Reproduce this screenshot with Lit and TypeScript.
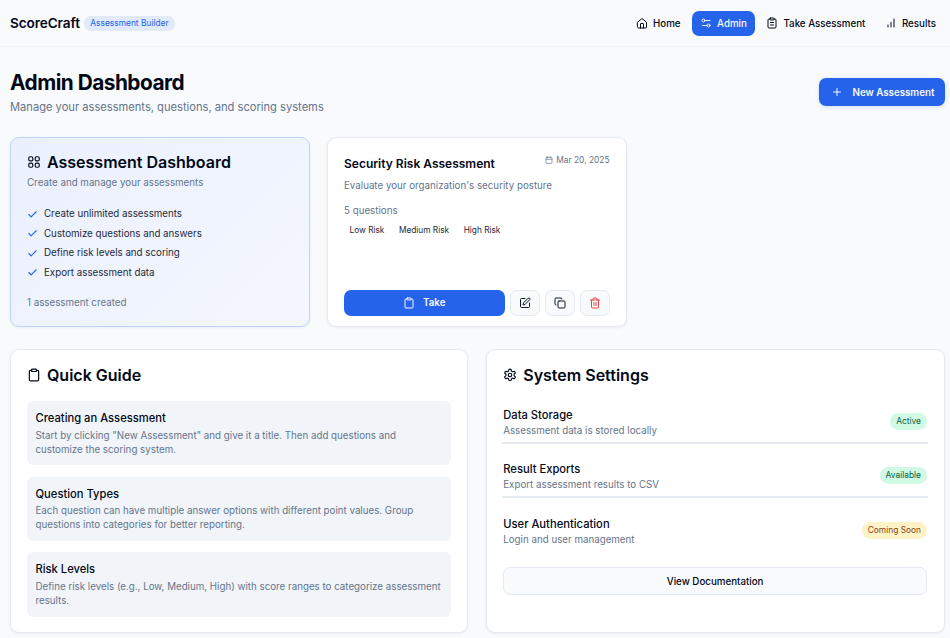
import { LitElement, html, css, svg } from "lit";
import { customElement } from "lit/decorators.js";

const ic = (size: number, body: unknown, sw = 2) => html`<svg class="ic" width=${size} height=${size} viewBox="0 0 24 24" fill="none" stroke="currentColor" stroke-width=${sw} stroke-linecap="round" stroke-linejoin="round">${body}</svg>`;

const clip = svg`<rect x="8" y="2" width="8" height="4" rx="1"/><path d="M16 4h2a2 2 0 0 1 2 2v14a2 2 0 0 1-2 2H6a2 2 0 0 1-2-2V6a2 2 0 0 1 2-2h2"/>`;
const clipText = svg`${clip}<path d="M9 11h6M9 16h6"/>`;
const home = svg`<path d="M3 10.5 12 3l9 7.5V20a2 2 0 0 1-2 2H5a2 2 0 0 1-2-2z"/><path d="M9 22v-8a1 1 0 0 1 1-1h4a1 1 0 0 1 1 1v8"/>`;
const sliders = svg`<path d="M20 7h-9M14 17H5"/><circle cx="17" cy="17" r="3"/><circle cx="7" cy="7" r="3"/>`;
const bars = svg`<path d="M6 20v-4M12 20v-9M18 20V4"/>`;
const plus = svg`<path d="M5 12h14M12 5v14"/>`;
const grid = svg`<rect x="3" y="3" width="7" height="7" rx="2.5"/><rect x="14" y="3" width="7" height="7" rx="2.5"/><rect x="3" y="14" width="7" height="7" rx="2.5"/><rect x="14" y="14" width="7" height="7" rx="2.5"/>`;
const check = svg`<path d="M20 6 9 17l-5-5"/>`;
const cal = svg`<rect x="3" y="4" width="18" height="18" rx="2"/><path d="M16 2v4M8 2v4M3 10h18"/>`;
const edit = svg`<path d="M12 3H5a2 2 0 0 0-2 2v14a2 2 0 0 0 2 2h14a2 2 0 0 0 2-2v-7"/><path d="M18.4 2.6a2.1 2.1 0 0 1 3 3L12 15l-4 1 1-4z"/>`;
const copy = svg`<rect x="8" y="8" width="14" height="14" rx="2"/><path d="M4 16a2 2 0 0 1-2-2V4a2 2 0 0 1 2-2h10a2 2 0 0 1 2 2"/>`;
const trash = svg`<path d="M3 6h18M19 6v14a2 2 0 0 1-2 2H7a2 2 0 0 1-2-2V6M8 6V4a2 2 0 0 1 2-2h4a2 2 0 0 1 2 2v2M10 11v6M14 11v6"/>`;
const gear = svg`<path d="M12.2 2h-.4a2 2 0 0 0-2 2v.2a2 2 0 0 1-1 1.7l-.4.3a2 2 0 0 1-2 0l-.2-.1a2 2 0 0 0-2.7.7l-.2.4a2 2 0 0 0 .7 2.7l.2.1a2 2 0 0 1 1 1.7v.5a2 2 0 0 1-1 1.7l-.2.1a2 2 0 0 0-.7 2.7l.2.4a2 2 0 0 0 2.7.7l.2-.1a2 2 0 0 1 2 0l.4.3a2 2 0 0 1 1 1.7v.2a2 2 0 0 0 2 2h.4a2 2 0 0 0 2-2v-.2a2 2 0 0 1 1-1.7l.4-.3a2 2 0 0 1 2 0l.2.1a2 2 0 0 0 2.7-.7l.2-.4a2 2 0 0 0-.7-2.7l-.2-.1a2 2 0 0 1-1-1.7v-.5a2 2 0 0 1 1-1.7l.2-.1a2 2 0 0 0 .7-2.7l-.2-.4a2 2 0 0 0-2.7-.7l-.2.1a2 2 0 0 1-2 0l-.4-.3a2 2 0 0 1-1-1.7V4a2 2 0 0 0-2-2z"/><circle cx="12" cy="12" r="3"/>`;

const navItems = [
  { label: "Home", icon: home },
  { label: "Admin", icon: sliders, active: true },
  { label: "Take Assessment", icon: clipText },
  { label: "Results", icon: bars },
];
const features = ["Create unlimited assessments", "Customize questions and answers", "Define risk levels and scoring", "Export assessment data"];
const guides = [
  { t: "Creating an Assessment", d: 'Start by clicking "New Assessment" and give it a title. Then add questions and customize the scoring system.' },
  { t: "Question Types", d: "Each question can have multiple answer options with different point values. Group questions into categories for better reporting." },
  { t: "Risk Levels", d: "Define risk levels (e.g., Low, Medium, High) with score ranges to categorize assessment results." },
];
const settings = [
  { t: "Data Storage", d: "Assessment data is stored locally", b: "Active", c: "green" },
  { t: "Result Exports", d: "Export assessment results to CSV", b: "Available", c: "green" },
  { t: "User Authentication", d: "Login and user management", b: "Coming Soon", c: "amber" },
];

@customElement("app-root")
export class AppRoot extends LitElement {
  static styles = css`
    :host { display: block; min-height: 638px; background: #f8fafc; color: #020817; font-family: Inter, "Liberation Sans", sans-serif; overflow: hidden; }
    * { box-sizing: border-box; }
    .ic { display: block; flex: none; }
    header { height: 47px; border-bottom: 1.5px solid #eef2f8; display: flex; align-items: center; justify-content: space-between; padding: 0 6px 0 10px; }
    .brand { display: flex; align-items: center; gap: 4.5px; }
    .logo { font-size: 13.6px; font-weight: 600; letter-spacing: -0.1px; }
    .tag { font-size: 8.4px; height: 15px; line-height: 15px; padding: 0 6px; border-radius: 8px; background: #e1eafb; color: #2563eb; }
    nav { display: flex; align-items: center; gap: 3.5px; }
    .nav { display: flex; align-items: center; gap: 5px; height: 25px; padding: 0 8px; border-radius: 7px; font-size: 9.75px; font-weight: 500; }
    .nav.active { background: #2563eb; color: #f8fafc; }
    main { padding: 0 5.5px 0 9.5px; }
    .top { display: flex; justify-content: space-between; align-items: center; height: 90px; }
    h1 { margin: 0; padding-left: 0.5px; font-size: 20.8px; line-height: 28px; font-weight: 700; letter-spacing: -0.5px; }
    .sub { margin-top: 2px; padding-left: 0.5px; font-size: 11.15px; color: #64748b; line-height: 17px; }
    .new { display: flex; align-items: center; gap: 10px; height: 28px; width: 126px; padding: 0 12px; border-radius: 7px; background: #2563eb; color: #f8fafc; font-size: 9.75px; font-weight: 600; white-space: nowrap; box-shadow: 0 1px 4px rgba(37,99,235,.18); }
    .row1 { display: grid; grid-template-columns: repeat(3, 1fr); gap: 17.5px; }
    .card { background: #fff; border: 1px solid #e5eaf2; border-radius: 9px; box-shadow: 0 1px 3px rgba(15,23,42,.06); }
    .dash { height: 190px; padding: 14px 16.5px; background: linear-gradient(135deg, #eaf0fd, #f4f7fe); border-color: #bfd2f8; }
    .h2 { display: flex; align-items: center; gap: 6px; font-size: 16px; line-height: 20px; font-weight: 600; }
    .dash .d { font-size: 9.75px; line-height: 14px; color: #64748b; margin-top: 4px; }
    ul { list-style: none; margin: 17px 0 0; padding: 0; display: flex; flex-direction: column; gap: 5.6px; }
    li { display: flex; align-items: center; gap: 6px; font-size: 9.75px; line-height: 14px; color: #1e293b; }
    li .ic { color: #2563eb; }
    .count { margin-top: 16.5px; font-size: 9.75px; line-height: 14px; color: #64748b; }
    .assess { height: 190px; padding: 16px 16.5px 10.5px 16px; display: flex; flex-direction: column; }
    .ah { display: flex; justify-content: space-between; align-items: flex-start; }
    .at { font-size: 12px; line-height: 20px; font-weight: 600; }
    .date { display: flex; align-items: center; gap: 3.5px; font-size: 8.4px; line-height: 12px; color: #64748b; }
    .ad { font-size: 9.75px; line-height: 14px; color: #64748b; margin-top: 5px; }
    .q { font-size: 9.75px; line-height: 14px; color: #64748b; margin-top: 11px; }
    .risks { display: flex; gap: 14.5px; padding: 0 5.5px; margin-top: 6px; font-size: 8.3px; line-height: 12px; color: #1e293b; }
    .actions { margin-top: auto; display: flex; gap: 5px; }
    .take { flex: 1; height: 26px; border-radius: 7px; background: #2563eb; color: #f8fafc; display: flex; align-items: center; justify-content: center; gap: 8px; font-size: 9.75px; font-weight: 600; }
    .ib { width: 30px; height: 26px; border-radius: 7px; background: #f8fafc; border: 1px solid #e5eaf2; display: flex; align-items: center; justify-content: center; color: #0f172a; }
    .ib.red { color: #ef4444; }
    .row2 { display: grid; grid-template-columns: 1fr 1fr; gap: 17.5px; margin-top: 22px; }
    .panel { height: 284px; padding: 15px 16.5px; }
    .guides { margin-top: 16px; display: flex; flex-direction: column; gap: 11.2px; }
    .g { height: 64.4px; padding: 9px 8.5px; border-radius: 6px; background: #f1f5f9; }
    .gt { font-size: 11.2px; line-height: 16px; font-weight: 500; }
    .gd { font-size: 9.75px; line-height: 14px; color: #64748b; margin-top: 2.5px; }
    .settings { margin-top: 23px; }
    .s { display: flex; justify-content: space-between; align-items: center; height: 36px; padding: 0 1px 5px; border-bottom: 2px solid #e5eaf2; margin: 0 -1px 18px; }
    .s:last-child { border-bottom: 0; margin-bottom: 15px; }
    .st { font-size: 11.2px; line-height: 15px; font-weight: 500; }
    .sd { font-size: 9.75px; line-height: 14px; color: #64748b; margin-top: 1px; }
    .badge { font-size: 8.4px; height: 17px; line-height: 17px; padding: 0 6px; border-radius: 9px; margin-bottom: 2px; }
    .green { background: #d1fae5; color: #065f46; }
    .amber { background: #fef3c7; color: #92400e; }
    .doc { height: 28px; border-radius: 7px; border: 1px solid #e5eaf2; background: #f8fafc; display: flex; align-items: center; justify-content: center; font-size: 9.75px; font-weight: 500; }
  `;

  render() {
    return html`
      <header>
        <div class="brand"><span class="logo">ScoreCraft</span><span class="tag">Assessment Builder</span></div>
        <nav>
          ${navItems.map((n) => html`<div class="nav ${n.active ? "active" : ""}">${ic(12, n.icon)}<span>${n.label}</span></div>`)}
        </nav>
      </header>
      <main>
        <div class="top">
          <div><h1>Admin Dashboard</h1><div class="sub">Manage your assessments, questions, and scoring systems</div></div>
          <div class="new">${ic(12, plus)}<span>New Assessment</span></div>
        </div>
        <div class="row1">
          <div class="card dash">
            <div class="h2">${ic(14, grid)}Assessment Dashboard</div>
            <div class="d">Create and manage your assessments</div>
            <ul>${features.map((f) => html`<li>${ic(11, check, 2.4)}${f}</li>`)}</ul>
            <div class="count">1 assessment created</div>
          </div>
          <div class="card assess">
            <div class="ah"><div class="at">Security Risk Assessment</div><div class="date">${ic(8, cal)}Mar 20, 2025</div></div>
            <div class="ad">Evaluate your organization's security posture</div>
            <div class="q">5 questions</div>
            <div class="risks"><span>Low Risk</span><span>Medium Risk</span><span>High Risk</span></div>
            <div class="actions">
              <div class="take">${ic(12, clip)}<span>Take</span></div>
              <div class="ib">${ic(12, edit)}</div>
              <div class="ib">${ic(12, copy)}</div>
              <div class="ib red">${ic(12, trash)}</div>
            </div>
          </div>
        </div>
        <div class="row2">
          <div class="card panel">
            <div class="h2">${ic(14, clip)}Quick Guide</div>
            <div class="guides">${guides.map((g) => html`<div class="g"><div class="gt">${g.t}</div><div class="gd">${g.d}</div></div>`)}</div>
          </div>
          <div class="card panel">
            <div class="h2">${ic(14, gear)}System Settings</div>
            <div class="settings">${settings.map((s) => html`<div class="s"><div><div class="st">${s.t}</div><div class="sd">${s.d}</div></div><span class="badge ${s.c}">${s.b}</span></div>`)}</div>
            <div class="doc">View Documentation</div>
          </div>
        </div>
      </main>
    `;
  }
}
